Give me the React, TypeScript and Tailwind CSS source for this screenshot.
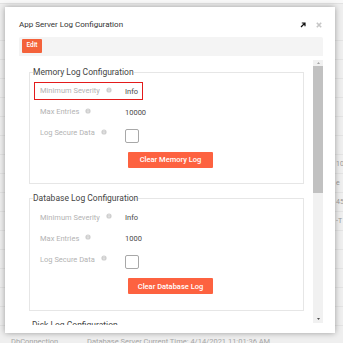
import React from "react";

const font = { fontFamily: "Roboto, 'Liberation Sans', sans-serif" };

function InfoDot() {
  return (
    <svg width="6" height="6" viewBox="0 0 6 6" className="ml-[6px] mt-[-3px] shrink-0">
      <circle cx="3" cy="3" r="2.6" fill="#cfcfcf" />
      <rect x="2.6" y="2.4" width="0.8" height="2" fill="#f4f4f4" />
      <rect x="2.6" y="1.3" width="0.8" height="0.7" fill="#f4f4f4" />
    </svg>
  );
}

function Row({ label, children, boxed }: { label: string; children: React.ReactNode; boxed?: boolean }) {
  return (
    <div
      className={`flex items-center h-[18px] pl-[5px] border ${
        boxed ? "self-start w-fit pr-[4px] border-[#e31b1b]" : "pr-[5px] border-transparent"
      }`}
    >
      <div className="flex items-center w-[85px] text-[7.5px] text-[#b3b3b3]">
        <span>{label}</span>
        <InfoDot />
      </div>
      {children}
    </div>
  );
}

function Section({
  title,
  entries,
  button,
  boxed,
}: {
  title: string;
  entries: string;
  button: string;
  boxed?: boolean;
}) {
  return (
    <fieldset className="border border-[#e6e6e6] ml-[10px] mr-[9px] px-[4px] pb-[14px]">
      <legend className="-ml-px text-[8.5px] leading-[10px] text-[#444444]">{title}</legend>
      <div className="mt-[5px] flex flex-col gap-[3px]">
        <Row label="Minimum Severity" boxed={boxed}>
          <span className="pt-px text-[7.5px] text-[#4a4a4a]">Info</span>
        </Row>
        <Row label="Max Entries">
          <span className="pt-px text-[7.5px] text-[#4a4a4a]">{entries}</span>
        </Row>
        <Row label="Log Secure Data">
          <span className="self-start mt-[4px] w-[14px] h-[14px] border border-[#a8a8a8] rounded-[2px] bg-white" />
        </Row>
      </div>
      <button className="mt-[10px] ml-[94px] w-[85px] h-[16px] bg-[#fd6240] text-white text-[7.5px] font-medium rounded-[1px]">
        {button}
      </button>
    </fieldset>
  );
}

export default function App() {
  const bgRows = [
    { right: "" },
    { right: "" },
    { right: "" },
    { right: "" },
    { right: "" },
    { right: "" },
    { right: "" },
    { right: "10," },
    { right: "e" },
    { right: "457" },
    { right: "-T" },
    { right: "" },
    { right: "" },
    { right: "" },
    { right: "" },
    { right: "" },
  ];

  return (
    <div className="relative w-[343px] h-[343px] overflow-hidden bg-[#efefef]" style={font}>
      {/* page behind the dialog */}
      <div className="h-[4px] bg-[#f8f8f8] border-b border-[#e2e2e2]" />
      <div className="h-[18px]" />
      <div className="flex flex-col">
        {bgRows.map((r, i) => (
          <div key={i} className="h-[19px] border-b border-[#e3e3e3] flex items-center text-[7px] text-[#9a9a9a]">
            <span className="ml-[336px] whitespace-nowrap">{r.right}</span>
          </div>
        ))}
      </div>
      <div className="absolute left-0 top-[336px] flex text-[7.5px] text-[#a5a5a5] whitespace-nowrap">
        <span className="ml-[11px] w-[76px]">DbConnection</span>
        <span>Database Server Current Time: 4/14/2021 11:01:36 AM</span>
      </div>

      {/* dialog */}
      <div className="absolute left-[5px] top-[7px] w-[330px] h-[326px] bg-white shadow-[0_0_6px_rgba(0,0,0,0.35)] flex flex-col">
        <div className="h-[30px] flex items-center pl-[14px] pr-[13px] pt-[6px]">
          <span className="text-[8px] text-[#333333]">App Server Log Configuration</span>
          <div className="ml-auto flex items-center gap-[10px]">
            <svg width="6" height="6" viewBox="0 0 6 6">
              <path d="M1 5 L5 1 M1.8 1 H5 V4.2" stroke="#111" strokeWidth="1.2" fill="none" />
            </svg>
            <svg width="6" height="6" viewBox="0 0 6 6">
              <path d="M0.8 0.8 L5.2 5.2 M5.2 0.8 L0.8 5.2" stroke="#c6c6c6" strokeWidth="1.6" fill="none" />
            </svg>
          </div>
        </div>

        <div className="ml-[14px] w-[304px] h-[288px] bg-[#f4f4f4] rounded-[2px] flex flex-col">
          <div className="h-[19px] flex items-start pl-[3px] pt-[2px]">
            <button className="w-[20px] h-[14px] bg-[#f4623b] text-white text-[6.5px] font-medium rounded-[1px]">
              Edit
            </button>
          </div>
          <div className="flex-1 bg-white flex overflow-hidden">
            <div className="flex-1 overflow-hidden pt-[11px] flex flex-col gap-[9px]">
              <Section title="Memory Log Configuration" entries="10000" button="Clear Memory Log" boxed />
              <Section title="Database Log Configuration" entries="1000" button="Clear Database Log" />
              <div className="ml-[13px] text-[8.5px] leading-[10px] text-[#444444]">Disk Log Configuration</div>
            </div>
            {/* scrollbar */}
            <div className="w-[10px] bg-[#f1f1f1] mt-[4px] mb-[2px] flex flex-col items-center">
              <svg width="5" height="4" viewBox="0 0 5 4" className="mt-[1px]">
                <path d="M2.5 1 L4 3 H1 Z" fill="#a3a3a3" />
              </svg>
              <div className="w-[10px] h-[127px] bg-[#c1c1c1] mt-[1px]" />
              <div className="flex-1" />
              <svg width="5" height="4" viewBox="0 0 5 4" className="mb-[2px]">
                <path d="M1 1 H4 L2.5 3 Z" fill="#505050" />
              </svg>
            </div>
          </div>
        </div>
      </div>
    </div>
  );
}
